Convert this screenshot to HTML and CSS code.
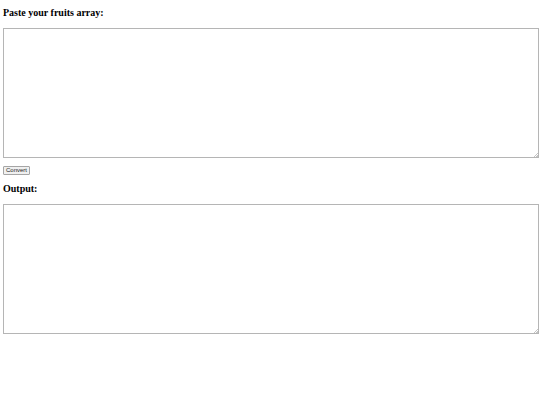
FILE: index.html
```
<!DOCTYPE html>
<html>
<head>
<meta charset="utf-8">
<link rel="stylesheet" href="styles.css">
</head>
<body>
<h3 class="title">Paste your fruits array:</h3>
<div class="field"><textarea class="box"></textarea></div>
<button class="btn">Convert</button>
<h3 class="title">Output:</h3>
<div class="field"><textarea class="box"></textarea></div>
</body>
</html>
```
FILE: styles.css
```
html, body {
  margin: 0;
  padding: 0;
  background: #fff;
}
body {
  padding: 7px 0 0 3px;
  font-family: "Liberation Serif", serif;
  color: #000;
}
.title {
  font-family: "Liberation Serif", serif;
  font-weight: bold;
  font-size: 10px;
  line-height: 12px;
  margin: 0 0 9px 0;
}
.field {
  position: relative;
  width: 536px;
  height: 130px;
}
.field::after {
  content: "";
  position: absolute;
  right: 1px;
  bottom: 1px;
  width: 4px;
  height: 4px;
  background: linear-gradient(135deg, transparent 45%, #c4c4c4 45%, #c4c4c4 60%, transparent 60%, transparent 75%, #c4c4c4 75%);
}
.box {
  display: block;
  box-sizing: border-box;
  width: 536px;
  height: 130px;
  margin: 0;
  padding: 2px;
  border: 1px solid #b5b5b5;
  background: #fff;
  resize: none;
  outline: none;
}
.btn {
  display: block;
  box-sizing: border-box;
  width: 27px;
  height: 9px;
  margin: 8px 0 8px 0;
  padding: 0;
  font-family: "Liberation Sans", sans-serif;
  font-size: 6px;
  line-height: 7px;
  color: #222;
  background: #f0f0f0;
  border: 1px solid #a5a5a5;
  border-radius: 1px;
}
```
